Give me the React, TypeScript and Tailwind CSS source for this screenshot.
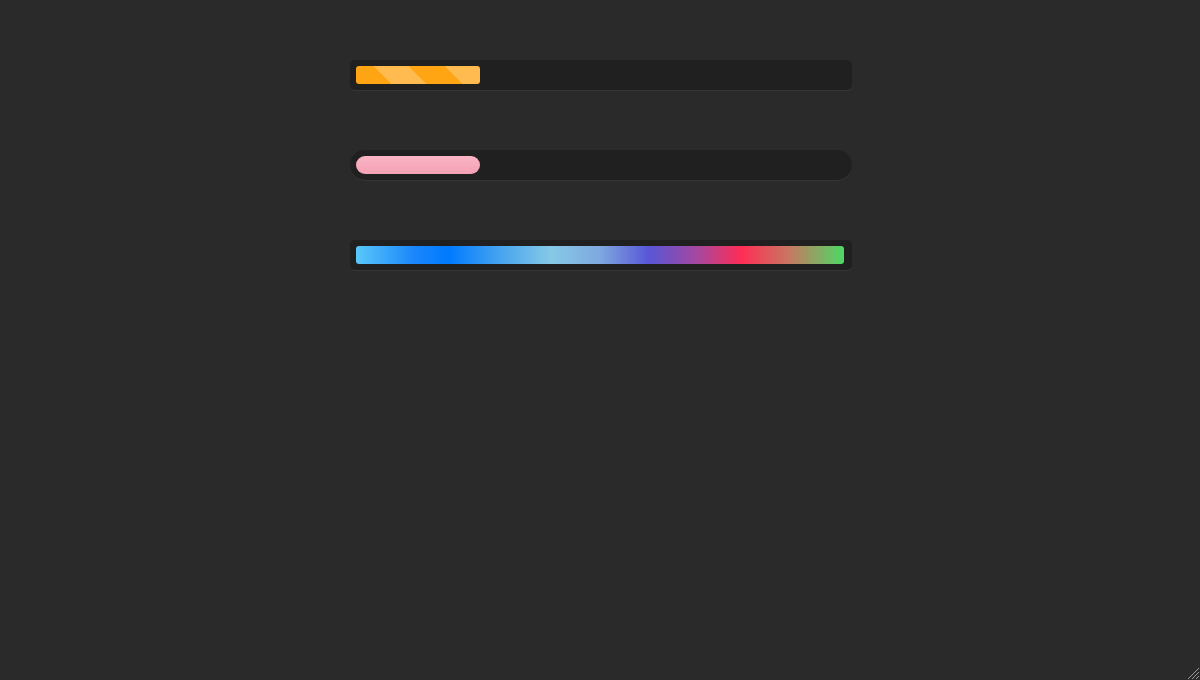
import React from "react";

const stripes: React.CSSProperties = {
  backgroundImage:
    "repeating-linear-gradient(45deg, #ffa412 0px, #ffa412 25px, #ffbb4f 25px, #ffbb4f 50px)",
};

const rainbow: React.CSSProperties = {
  backgroundImage:
    "linear-gradient(to right, #5ac8fa 0%, #1a86fb 12%, #007aff 19%, #4aa6ee 30%, #86c9e6 40%, #7fa8e0 50%, #5856d6 60%, #a6479e 70%, #ff2d55 79%, #c57a62 89%, #4cd964 100%)",
};

export default function App() {
  return (
    <div className="relative min-h-[680px] w-full bg-[#2a2a2a] flex flex-col items-center pt-[60px] gap-[60px]">
      <div className="w-[502px] ml-[2px] h-[30px] rounded-[5px] bg-[#202020] p-[6px] shadow-[0_1px_0_#353535]">
        <div className="w-[124px] h-[18px] rounded-[3px]" style={stripes} />
      </div>
      <div className="w-[502px] ml-[2px] h-[30px] rounded-full bg-[#202020] p-[6px] shadow-[0_1px_0_#353535]">
        <div className="w-[124px] h-[18px] rounded-full bg-gradient-to-b from-[#fab5c5] to-[#f4a1b4]" />
      </div>
      <div className="w-[502px] ml-[2px] h-[30px] rounded-[5px] bg-[#202020] p-[6px] pr-[8px] shadow-[0_1px_0_#353535]">
        <div className="w-full h-[18px] rounded-[3px]" style={rainbow} />
      </div>
      <svg className="absolute right-0 bottom-0" width="14" height="14" viewBox="0 0 14 14">
        <line x1="13" y1="2" x2="2" y2="13" stroke="#9a9a9a" strokeWidth="1" />
        <line x1="13" y1="6" x2="6" y2="13" stroke="#9a9a9a" strokeWidth="1" />
        <line x1="13" y1="10" x2="10" y2="13" stroke="#9a9a9a" strokeWidth="1" />
      </svg>
    </div>
  );
}
